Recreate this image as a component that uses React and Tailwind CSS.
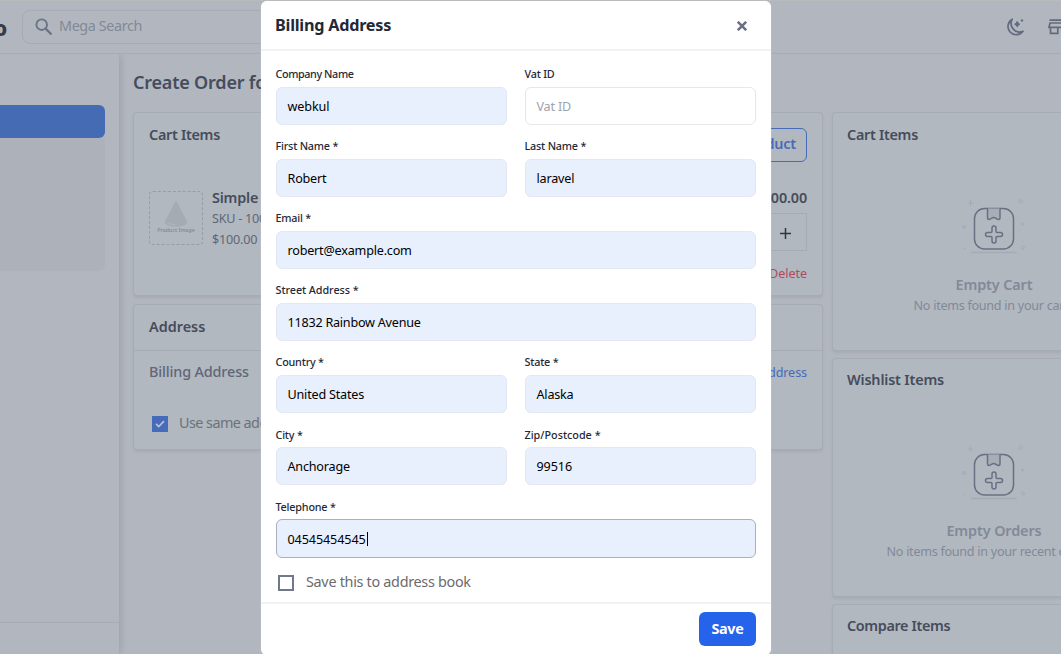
import React from "react";

function SearchIcon() {
  return (
    <svg width="18" height="18" viewBox="0 0 18 18" fill="none" stroke="#6b7284" strokeWidth="1.9">
      <circle cx="6.7" cy="6.7" r="5.3" />
      <path d="M10.6 10.6 16.5 16.5" strokeWidth="2.3" />
    </svg>
  );
}

function MoonIcon() {
  return (
    <svg width="20" height="20" viewBox="0 0 20 20" fill="none">
      <path d="M7.200 2.200A8.300 8.300 0 1 0 18 14.300A8.600 8.600 0 0 1 7.200 2.200Z" stroke="#636a7c" strokeWidth="1.700" strokeLinejoin="round" />
      <path d="M12.200 4.300q.7 2.200 2.700 2.900-2 .7-2.700 2.900-.7-2.200-2.700-2.900 2-.7 2.700-2.900Z" fill="#636a7c" stroke="#636a7c" strokeWidth=".8" />
      <path d="M17 2.100 18.500 3.600 17 5.100 15.500 3.600Z" fill="#636a7c" />
    </svg>
  );
}

function StoreIcon() {
  return (
    <svg width="20" height="18" viewBox="0 0 20 18" fill="none" stroke="#636a7c" strokeWidth="1.700">
      <path d="M1.500 2.200h17M2 5h16l1 4.300H1ZM2.500 9.300v6h7.300v-6M17 9.300v6.500" />
    </svg>
  );
}

function EmptyIcon() {
  return (
    <svg width="72" height="60" viewBox="0 0 72 60" fill="none">
      <g stroke="#a5aab4" strokeWidth="1">
        <path d="M12.500 5v6M9.500 8h6M62.500 29h4M64.500 27v4M6.200 53.500h1.600" />
        <circle cx="62.500" cy="6.500" r="1.700" />
        <circle cx="6" cy="32" r="1.500" />
        <circle cx="65" cy="52.500" r="1.500" />
      </g>
      <path d="M14 57.500h44" stroke="#a5aab4" strokeWidth="1.600" strokeLinecap="round" />
      <g stroke="#6a7083" strokeWidth="1.500" strokeLinejoin="round">
        <rect x="16.500" y="13.500" width="39" height="40.500" rx="10" />
        <path d="M29.500 13.500V23q0 1.500 1.500 1.500 1.400 0 2.500-1.200 2.200-1.800 4.500 0 1.500 1.200 2.500 1.200 1.500 0 1.500-1.500V13.500" fill="#a8adb7" />
        <path d="M34 33q0-2 2-2t2 2v3.500q0 1 1 1h3.500q2 0 2 2t-2 2H39q-1 0-1 1V46q0 2-2 2t-2-2v-3.500q0-1-1-1h-3.500q-2 0-2-2t2-2H33q1 0 1-1Z" />
      </g>
    </svg>
  );
}

function CloseIcon() {
  return (
    <svg width="10" height="10" viewBox="0 0 10 10" stroke="#697084" strokeWidth="2.500" strokeLinecap="butt">
      <path d="M.8.8 9.200 9.200M9.200.8.8 9.200" />
    </svg>
  );
}

const cardClass = "rounded border border-[#a6abb4] bg-[#b2b8bf] shadow-[0_2px_3px_#a6abb4]";
const headingClass = "text-[14.4px] leading-5 font-semibold text-[#454c5c]";

function EmptyCard({ className, title, titleClass, emptyTitle, emptyClass, note, noteClass }) {
  return (
    <section className={`${cardClass} ${className} w-[324px] shrink-0`}>
      <h2 className={`${headingClass} ${titleClass} px-3.5`}>{title}</h2>
      {emptyTitle && (
        <div className={`flex flex-col items-center ${emptyClass}`}>
          <EmptyIcon />
          <p className="mt-5 text-[14.400px] leading-5 font-semibold tracking-[-0.1px] text-[#828998]">{emptyTitle}</p>
          <p className={`mt-px pr-1.5 text-[12.600px] leading-5 whitespace-nowrap text-[#828998] ${noteClass}`}>{note}</p>
        </div>
      )}
    </section>
  );
}

function Field({ label, value, placeholder, active, wide, className = "", labelClass = "tracking-[-0.2px]", valueClass = "tracking-[-0.2px]" }) {
  return (
    <div className={`${wide ? "col-span-2" : ""} ${className}`}>
      <label className={`block h-[21px] text-[10.8px] leading-4 font-medium text-[#1f2937] ${labelClass}`}>{label}</label>
      <div
        className={`flex items-center rounded-md border px-[11px] text-[12.6px] leading-5 ${
          active ? "-mt-px h-[39px] border-[#a9b0bf] bg-[#e8effd] pt-px" : value ? "h-[38px] border-[#e2e7f1] bg-[#e8effd]" : "h-[38px] border-[#e5e7eb] bg-white"
        }`}
      >
        <span className={`${value ? "text-black" : "text-[#9ca3af]"} ${valueClass} pt-px`}>{value || placeholder}</span>
        {active && <span className="ml-px h-3.5 w-px bg-black" />}
      </div>
    </div>
  );
}

function Modal() {
  return (
    <div className="absolute top-0 left-[261px] z-20 flex h-[654px] w-[510px] flex-col rounded-md bg-white shadow-[0_0_1px_#e8eaee]">
      <header className="flex h-[50px] shrink-0 items-center justify-between border-b-2 border-[#f1f2f4] pr-6 pl-3.5">
        <h1 className="text-[16.2px] leading-6 font-bold tracking-[-0.23px] text-[#1f2937]">Billing Address</h1>
        <span className="pt-0.5"><CloseIcon /></span>
      </header>
      <div className="grid h-[513px] shrink-0 grid-cols-2 content-start gap-x-[18px] gap-y-[13px] pt-[15px] pr-[15.500px] pl-[14.500px]">
        <Field label="Company Name" value="webkul" labelClass="tracking-[-0.4px]" valueClass="tracking-[-0.1px]" />
        <Field label="Vat ID" placeholder="Vat ID" />
        <Field label="First Name *" value="Robert" />
        <Field label="Last Name *" value="laravel" />
        <Field label="Email *" value="robert@example.com" wide />
        <Field label="Street Address *" value="11832 Rainbow Avenue" valueClass="tracking-[-0.23px]" labelClass="tracking-[-0.060px]" wide />
        <Field label="Country *" value="United States" />
        <Field label="State *" value="Alaska" />
        <Field label="City *" value="Anchorage" labelClass="pt-px tracking-[-0.2px]" />
        <Field label="Zip/Postcode *" value="99516" labelClass="pt-px tracking-normal" valueClass="tracking-[-0.1px]" />
        <Field label="Telephone *" value="04545454545" className="pt-px" valueClass="tracking-[-0.1px]" active wide />
      </div>
      <div className="flex h-[38px] shrink-0 items-center gap-3 pl-[17px]">
        <span className="h-4 w-4 border-2 border-[#70788a]" />
        <span className="pb-0.5 text-[14.4px] leading-5 tracking-[-0.3px] text-[#6b6b6b]">Save this to address book</span>
      </div>
      <footer className="flex h-[53px] shrink-0 items-start justify-end border-t-2 border-[#f1f2f4] pt-2 pr-[15px]">
        <button className="h-[34px] w-[57px] rounded-md bg-[#2563eb] text-[14.4px] leading-5 font-bold tracking-[-0.35px] text-white">Save</button>
      </footer>
    </div>
  );
}

export default function App() {
  return (
    <div className="relative flex h-[654px] w-[1061px] flex-col overflow-hidden border-t border-[#b9bbbd] bg-[#b2b7bf] font-['Noto_Sans','Open_Sans',sans-serif]">
      <div className="relative z-10 flex h-[53px] shrink-0 items-center border-b border-[#a6abb4] bg-[#b2b7bf]">
        <div className="flex w-[22px] justify-start">
          <span className="-ml-[6px] pt-0.5 text-[21px] leading-6 font-extrabold text-[#363b49]">o</span>
        </div>
        <div className="flex h-[34px] w-[420px] items-center gap-1.5 rounded-lg border border-[#a6abb4] pl-3">
          <SearchIcon />
          <span className="pb-0.5 text-[14.4px] leading-5 tracking-[-0.4px] text-[#828998]">Mega Search</span>
        </div>
        <div className="ml-auto flex w-[56px] shrink-0 items-center gap-[23px]">
          <span className="shrink-0"><MoonIcon /></span>
          <span className="shrink-0"><StoreIcon /></span>
        </div>
      </div>

      <div className="flex min-h-0 flex-1">
        <aside className="flex w-[119px] shrink-0 flex-col bg-[#b2b7bf] shadow-[2px_0_7px_#9da2ab]">
          <div className="mt-[51px] w-[105px]">
            <div className="h-[33px] rounded-r-md bg-[#466bb5]" />
            <div className="h-[133px] rounded-br-md bg-[#adb2ba]" />
          </div>
          <div className="mt-auto h-[32px] border-t border-[#a6abb4]" />
        </aside>

        <main className="flex min-w-0 flex-1 flex-col pl-3.5">
          <h1 className="mt-[15px] h-[43px] shrink-0 text-[18px] leading-[26px] font-semibold tracking-[-0.2px] whitespace-nowrap text-[#454c5c]">Create Order for</h1>
          <div className="flex items-start gap-[9px]">
            <div className="flex w-[690px] shrink-0 flex-col gap-2">
              <section className={`${cardClass} flex h-[184px] flex-col`}>
                <div className="flex h-[78px] items-start justify-between pt-3 pr-[15px] pl-[15px]">
                  <h2 className={`${headingClass} tracking-[-0.3px]`}>Cart Items</h2>
                  <span className="mt-[3px] rounded-md border border-[#466bb8] px-2.5 pt-[5px] pb-[7px] text-[14.4px] leading-5 font-semibold tracking-[-0.2px] text-[#466bb8]">Add Product</span>
                </div>
                <div className="flex justify-between px-[15px]">
                  <div className="flex gap-[9px]">
                    <div className="flex h-[54px] w-[54px] flex-col items-center rounded border border-dashed border-[#979da8] pt-2">
                      <svg width="26" height="28" viewBox="0 0 26 28">
                        <path d="M13 .5 24 21q1 3-3.500 4.500-7.500 2.500-15 0Q1 24 2 21Z" fill="#a5abb5" />
                        <path d="M4 22.500q4 2.500 9 2.300" fill="none" stroke="#afb4bd" />
                      </svg>
                      <span className="-mt-px text-[5.200px] leading-[7px] font-semibold whitespace-nowrap text-[#858c9a]">Product Image</span>
                    </div>
                    <div className="-mt-[3px]">
                      <p className="text-[14.4px] leading-5 font-semibold tracking-[-0.2px] whitespace-nowrap text-[#454c5c]">Simple</p>
                      <p className="text-[12.6px] leading-[21px] tracking-[-0.24px] whitespace-nowrap text-[#5f6677]">SKU - 1001</p>
                      <p className="text-[12.6px] leading-[21px] tracking-[-0.2px] text-[#5f6677]">$100.00</p>
                    </div>
                  </div>
                  <div className="-mt-[3px] flex flex-col items-end">
                    <p className="text-[14.4px] leading-5 font-semibold tracking-[-0.150px] text-[#454c5c]">$100.00</p>
                    <div className="mt-[5px] flex h-[38px] w-[110px] items-center justify-end border border-[#a6abb4] pt-0.5 pr-[15px]">
                      <svg width="11" height="11" viewBox="0 0 11 11" stroke="#2f3542" strokeWidth="1.500"><path d="M5.500 0v11M0 5.500h11" /></svg>
                    </div>
                    <p className="mt-[13px] text-[12.6px] leading-5 tracking-[-0.05px] text-[#b04a5e]">Delete</p>
                  </div>
                </div>
              </section>

              <section className={`${cardClass} h-[146px]`}>
                <div className="flex h-[46px] items-center border-b border-[#a6abb4] px-[15px] pb-0.5">
                  <h2 className={headingClass}>Address</h2>
                </div>
                <div className="flex h-[42px] items-center justify-between px-[15px]">
                  <span className="text-[14.4px] leading-5 font-medium tracking-[-0.140px] text-[#5f6677]">Billing Address</span>
                  <span className="pt-0.5 text-[12.6px] leading-5 tracking-[-0.1px] text-[#466bb8]">Add Address</span>
                </div>
                <div className="mt-5 flex items-center gap-[11px] pl-[18px]">
                  <span className="mt-0.5 flex h-4 w-4 items-center justify-center bg-[#466bb8]">
                    <svg width="10" height="8" viewBox="0 0 10 8" fill="none" stroke="#b9c2d2" strokeWidth="1.700"><path d="M1 3.800 3.700 6.500 9 1.200" /></svg>
                  </span>
                  <span className="text-[14.4px] leading-5 tracking-[-0.550px] text-[#6d7179]">Use same address</span>
                </div>
              </section>
            </div>

            <div className="flex shrink-0 flex-col gap-[7px]">
              <EmptyCard className="h-[239px] pt-3" title="Cart Items" titleClass="tracking-[-0.3px]" emptyTitle="Empty Cart" emptyClass="mt-[50px]" note="No items found in your cart" noteClass="tracking-[-0.28px]" />
              <EmptyCard className="h-[239px] pt-[11px]" title="Wishlist Items" titleClass="tracking-[-0.170px]" emptyTitle="Empty Orders" emptyClass="mt-[51px]" note="No items found in your recent orders" noteClass="tracking-[-0.28px]" />
              <EmptyCard className="h-[239px] pt-[11px]" title="Compare Items" titleClass="tracking-[-0.370px]" />
            </div>
          </div>
        </main>
      </div>
      <Modal />
    </div>
  );
}
